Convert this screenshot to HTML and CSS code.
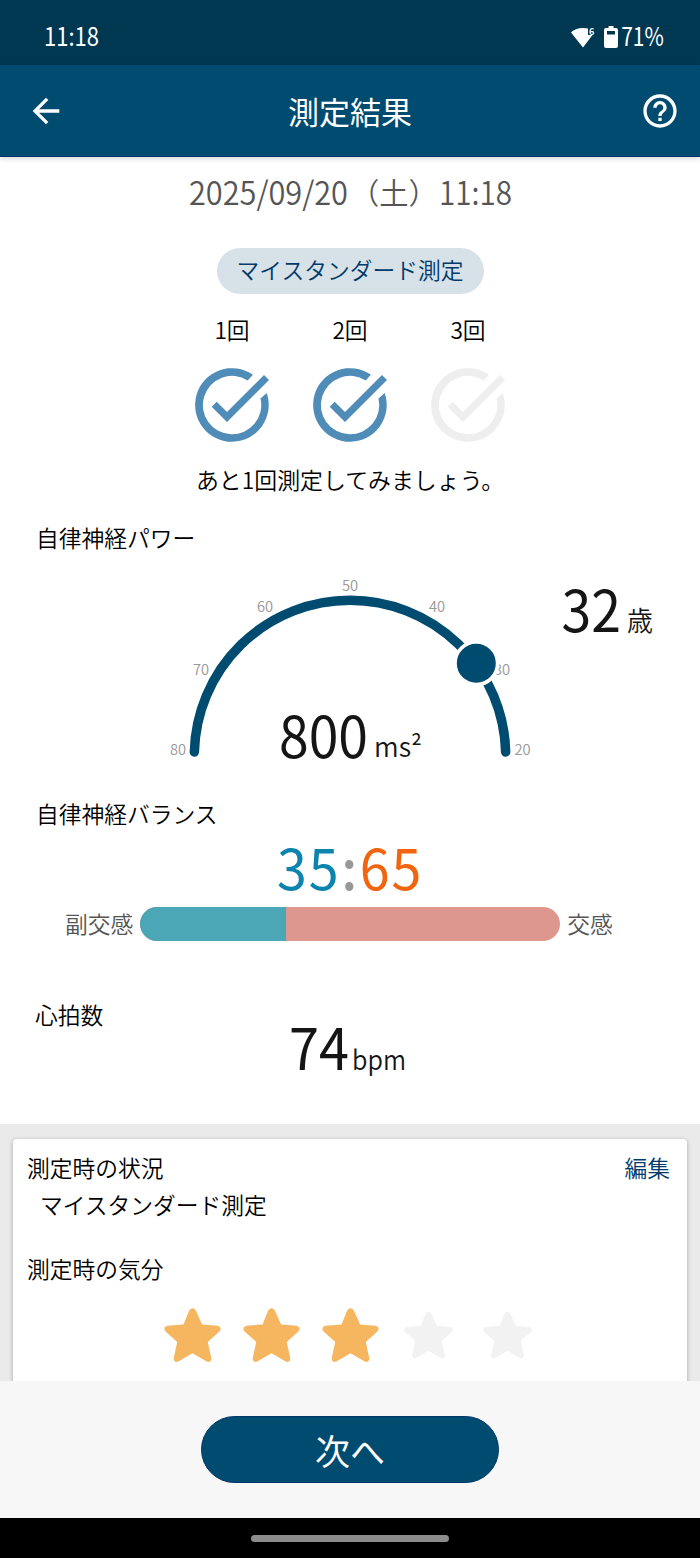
FILE: index.html
```html
<!DOCTYPE html>
<html lang="ja">
<head>
<meta charset="utf-8">
<title>測定結果</title>
<link rel="stylesheet" href="styles.css">
</head>
<body>
<div class="status">
  <span class="clock">11:18</span>
  <div class="status-right">
    <svg class="wifi" viewBox="0 0 26 24" width="26" height="24"><path d="M1 7.500Q5 3.200 13 3Q16 3 18 3.600V10H22.500L13 22.500Z" fill="#fff"/><text x="19" y="9.500" class="wifi-gen">6</text></svg>
    <svg class="battery" viewBox="0 0 14 24" width="14" height="24"><path fill="#fff" fill-rule="evenodd" d="M4.500 1h5v2H12q2 0 2 2v16q0 2-2 2H2q-2 0-2-2V5q0-2 2-2h2.500zM3 6v3.500h8V6z"/></svg>
    <span class="percent">71%</span>
  </div>
</div>
<header class="appbar">
  <svg viewBox="0 0 24 24" width="40" height="40"><path fill="#fff" d="M20 11H7.830l5.590-5.590L12 4l-8 8 8 8 1.410-1.410L7.830 13H20v-2z"/></svg>
  <h1>測定結果</h1>
  <svg viewBox="0 0 24 24" width="40" height="40"><path fill="#fff" d="M11 18h2v-2h-2v2zm1-16C6.480 2 2 6.480 2 12s4.480 10 10 10 10-4.480 10-10S17.520 2 12 2zm0 18c-4.410 0-8-3.590-8-8s3.590-8 8-8 8 3.590 8 8-3.590 8-8 8zm0-14c-2.210 0-4 1.790-4 4h2c0-1.100.9-2 2-2s2 .9 2 2c0 2-3 1.750-3 5h2c0-2.250 3-2.500 3-5 0-2.210-1.790-4-4-4z"/></svg>
</header>
<main class="result">
  <div class="date"><svg viewBox="0 0 340 40" width="340" height="40"><text x="9" y="33" textLength="159" lengthAdjust="spacingAndGlyphs">2025/09/20</text><text class="weekday" x="170" y="32">（土）</text><text x="259" y="33" textLength="73" lengthAdjust="spacingAndGlyphs">11:18</text></svg></div>
  <div class="tag">マイスタンダード測定</div>
  <div class="rounds">
    <div class="round"><span>1回</span><svg class="check" viewBox="-37 -37 74 74"><path d="M20.900-30.300A36.800 36.800 0 1 0 34.700-12.100L28.500-6.600A29.200 29.200 0 1 1 15.700-24.600Z"/><path d="M32-30L37-25L-5 17L-20.300 1.700L-15.300-3.300L-5 7Z"/></svg></div>
    <div class="round"><span>2回</span><svg class="check" viewBox="-37 -37 74 74"><path d="M20.900-30.300A36.800 36.800 0 1 0 34.700-12.100L28.500-6.600A29.200 29.200 0 1 1 15.700-24.600Z"/><path d="M32-30L37-25L-5 17L-20.300 1.700L-15.300-3.300L-5 7Z"/></svg></div>
    <div class="round"><span>3回</span><svg class="check off" viewBox="-37 -37 74 74"><path d="M20.900-30.300A36.800 36.800 0 1 0 34.700-12.100L28.500-6.600A29.200 29.200 0 1 1 15.700-24.600Z"/><path d="M32-30L37-25L-5 17L-20.300 1.700L-15.300-3.300L-5 7Z"/></svg></div>
  </div>
  <p class="message">あと1回測定してみましょう。</p>
  <h2 class="label power">自律神経パワー</h2>
  <svg class="gauge" viewBox="0 553 700 246" width="700" height="246">
    <g class="ticks">
      <text x="178" y="755">80</text><text x="201" y="675">70</text><text x="265" y="612">60</text><text x="350" y="591">50</text><text x="437" y="612">40</text><text x="502" y="675">30</text><text x="522.500" y="755">20</text>
    </g>
    <path class="arc" d="M194.350 752A155.700 155.700 0 0 1 505.650 752"/>
    <circle class="knob" cx="476.300" cy="663.300" r="21.300"/>
    <text class="num" x="279" y="758" textLength="89" lengthAdjust="spacingAndGlyphs">800</text>
    <text class="unit" x="374" y="757" textLength="48" lengthAdjust="spacingAndGlyphs">ms²</text>
    <text class="num" x="561.500" y="632" textLength="59.500" lengthAdjust="spacingAndGlyphs">32</text>
    <text class="unit" x="627" y="631" textLength="26" lengthAdjust="spacingAndGlyphs">歳</text>
  </svg>
  <h2 class="label">自律神経バランス</h2>
  <div class="ratio"><span class="para">35</span><span class="colon">:</span><span class="symp">65</span></div>
  <div class="balance">
    <span>副交感</span>
    <div class="bar"><div class="bar-fill" style="width:34.800%"></div></div>
    <span>交感</span>
  </div>
  <h2 class="label heart">心拍数</h2>
  <svg class="bpm" viewBox="0 1020 700 60" width="700" height="60"><text class="num" x="289" y="1069" textLength="60" lengthAdjust="spacingAndGlyphs">74</text><text class="unit" x="352" y="1068.500" textLength="54" lengthAdjust="spacingAndGlyphs">bpm</text></svg>
</main>
<section class="details">
  <div class="card">
    <div class="card-head"><span>測定時の状況</span><span class="edit">編集</span></div>
    <p class="situation">マイスタンダード測定</p>
    <p class="mood">測定時の気分</p>
    <div class="stars">
      <svg class="star" viewBox="-86 -2 172 168"><path d="M-10 8Q0-6 10 8L29 50L76 54Q90 59 82 71L46 103L57 153Q55 167 43 162L0 137L-43 162Q-55 167-57 153L-46 103L-82 71Q-90 59-76 54L-27 50Z"/></svg>
      <svg class="star" viewBox="-86 -2 172 168"><path d="M-10 8Q0-6 10 8L29 50L76 54Q90 59 82 71L46 103L57 153Q55 167 43 162L0 137L-43 162Q-55 167-57 153L-46 103L-82 71Q-90 59-76 54L-27 50Z"/></svg>
      <svg class="star" viewBox="-86 -2 172 168"><path d="M-10 8Q0-6 10 8L29 50L76 54Q90 59 82 71L46 103L57 153Q55 167 43 162L0 137L-43 162Q-55 167-57 153L-46 103L-82 71Q-90 59-76 54L-27 50Z"/></svg>
      <svg class="star empty" viewBox="-86 -2 172 168"><path d="M-10 8Q0-6 10 8L29 50L76 54Q90 59 82 71L46 103L57 153Q55 167 43 162L0 137L-43 162Q-55 167-57 153L-46 103L-82 71Q-90 59-76 54L-27 50Z"/></svg>
      <svg class="star empty" viewBox="-86 -2 172 168"><path d="M-10 8Q0-6 10 8L29 50L76 54Q90 59 82 71L46 103L57 153Q55 167 43 162L0 137L-43 162Q-55 167-57 153L-46 103L-82 71Q-90 59-76 54L-27 50Z"/></svg>
    </div>
  </div>
</section>
<footer class="footer"><button class="next">次へ</button></footer>
<div class="nav"><div class="handle"></div></div>
</body>
</html>
```
FILE: styles.css
```css
* { box-sizing: border-box; margin: 0; padding: 0; }
body {
  width: 700px; height: 1558px; overflow: hidden;
  display: flex; flex-direction: column;
  background: #fff; color: #000;
  font-family: "Noto Sans CJK JP", sans-serif;
  font-size: 22.750px; font-weight: 350; line-height: 30px;
}
svg { display: block; flex: none; overflow: visible; }

.status {
  height: 65px; flex: none; background: #003852; color: #fff;
  display: flex; justify-content: space-between; align-items: center;
  padding: 8px 36px 0 44px;
  font-weight: 400; font-size: 25px;
}
.clock, .percent { display: block; transform: scaleX(.88); margin-top: -3px; }
.clock { transform-origin: left; }
.percent { transform: scaleX(.84); transform-origin: right; margin-left: -5px; }
.status-right { display: flex; align-items: center; }
.wifi { margin-right: 8px; }
.wifi-gen { font-size: 9px; font-weight: 700; fill: #fff; }

.appbar {
  position: relative; z-index: 1;
  height: 92px; flex: none; background: #004b70; color: #fff;
  display: flex; justify-content: space-between; align-items: center;
  padding: 0 20px 0 26px;
  border-bottom: 1px solid #00336a;
  box-shadow: 0 1px 6px rgba(0,0,0,.2);
}
.appbar h1 { font-size: 31px; font-weight: 400; line-height: 40px; margin-left: -6px; }

.result { height: 967px; flex: none; display: flex; flex-direction: column; align-items: center; }
.date { margin-top: 15px; font-size: 32.500px; }
.date svg text { fill: #555; }
.date .weekday { font-size: 29.300px; }
.tag {
  width: 267px; height: 46px; margin-top: 36px; border-radius: 23px;
  background: #d7e2e8; color: #003a6b;
  text-align: center; line-height: 43px;
}
.rounds { display: flex; gap: 44px; margin-top: 21px; }
.round { width: 74px; display: flex; flex-direction: column; align-items: center; gap: 23px; }
.check { width: 74px; height: 74px; fill: #4f8cb8; }
.check.off { fill: #eee; }
.message { margin-top: 22px; font-size: 22.900px; }
.label { align-self: flex-start; margin-left: 36px; font-size: 22.750px; font-weight: 350; line-height: 30px; }
.power { margin-top: 29px; }
.ticks text { font-size: 14.700px; text-anchor: middle; fill: #999; }
.arc { fill: none; stroke: #004b70; stroke-width: 9.500; stroke-linecap: round; }
.knob { fill: #004b70; stroke: #fff; stroke-width: 3.600; }
.num { font-size: 57px; font-weight: 400; fill: #151515; }
.unit { font-size: 27px; fill: #151515; }
.ratio { height: 78px; font-size: 56px; line-height: 73px; display: flex; font-weight: 400; letter-spacing: 2px; transform: scaleX(.96); }
.para { color: #0c84ad; }
.symp { color: #f16510; }
.colon { width: 20px; color: #999; font-weight: 500; text-align: center; }
.balance { align-self: stretch; height: 34px; padding-left: 65px; display: flex; align-items: center; gap: 7px; color: #555; }
.balance span { flex: none; }
.bar { flex: none; width: 420px; height: 34px; border-radius: 17px; overflow: hidden; background: #de978f; }
.bar-fill { height: 100%; background: #4ba7b5; }
.heart { margin: 59px 0 0 35px; }
.bpm { margin-top: -9px; }

.details { height: 257px; flex: none; padding: 15px 13px 0; background: #eaeaea; overflow: hidden; }
.card {
  height: 280px; padding: 14px 17px 0 14px; border-radius: 4px;
  background: #fff; box-shadow: 0 1px 4px rgba(0,0,0,.3);
}
.card-head { display: flex; justify-content: space-between; }
.edit { color: #003a6b; }
.situation { margin: 7px 0 0 13px; }
.mood { margin-top: 34px; }
.stars { display: flex; align-items: center; gap: 21.800px; margin: 22.500px 0 0 137px; }
.star { width: 57px; height: 56px; fill: #f6b55f; }
.star.empty { fill: #f2f2f2; transform: scale(.87); }

.footer { height: 137px; flex: none; background: #f7f7f7; display: flex; justify-content: center; padding-top: 35px; }
.next {
  width: 298px; height: 67px; border: 1px solid #003568; border-radius: 34px;
  background: #004b70; color: #fff; font: 400 35px/60px "Noto Sans CJK JP", sans-serif;
}
.nav { height: 40px; flex: none; background: #000; display: flex; justify-content: center; padding-top: 17px; }
.handle { width: 198px; height: 7px; border-radius: 4px; background: #8c8c8c; }
```
